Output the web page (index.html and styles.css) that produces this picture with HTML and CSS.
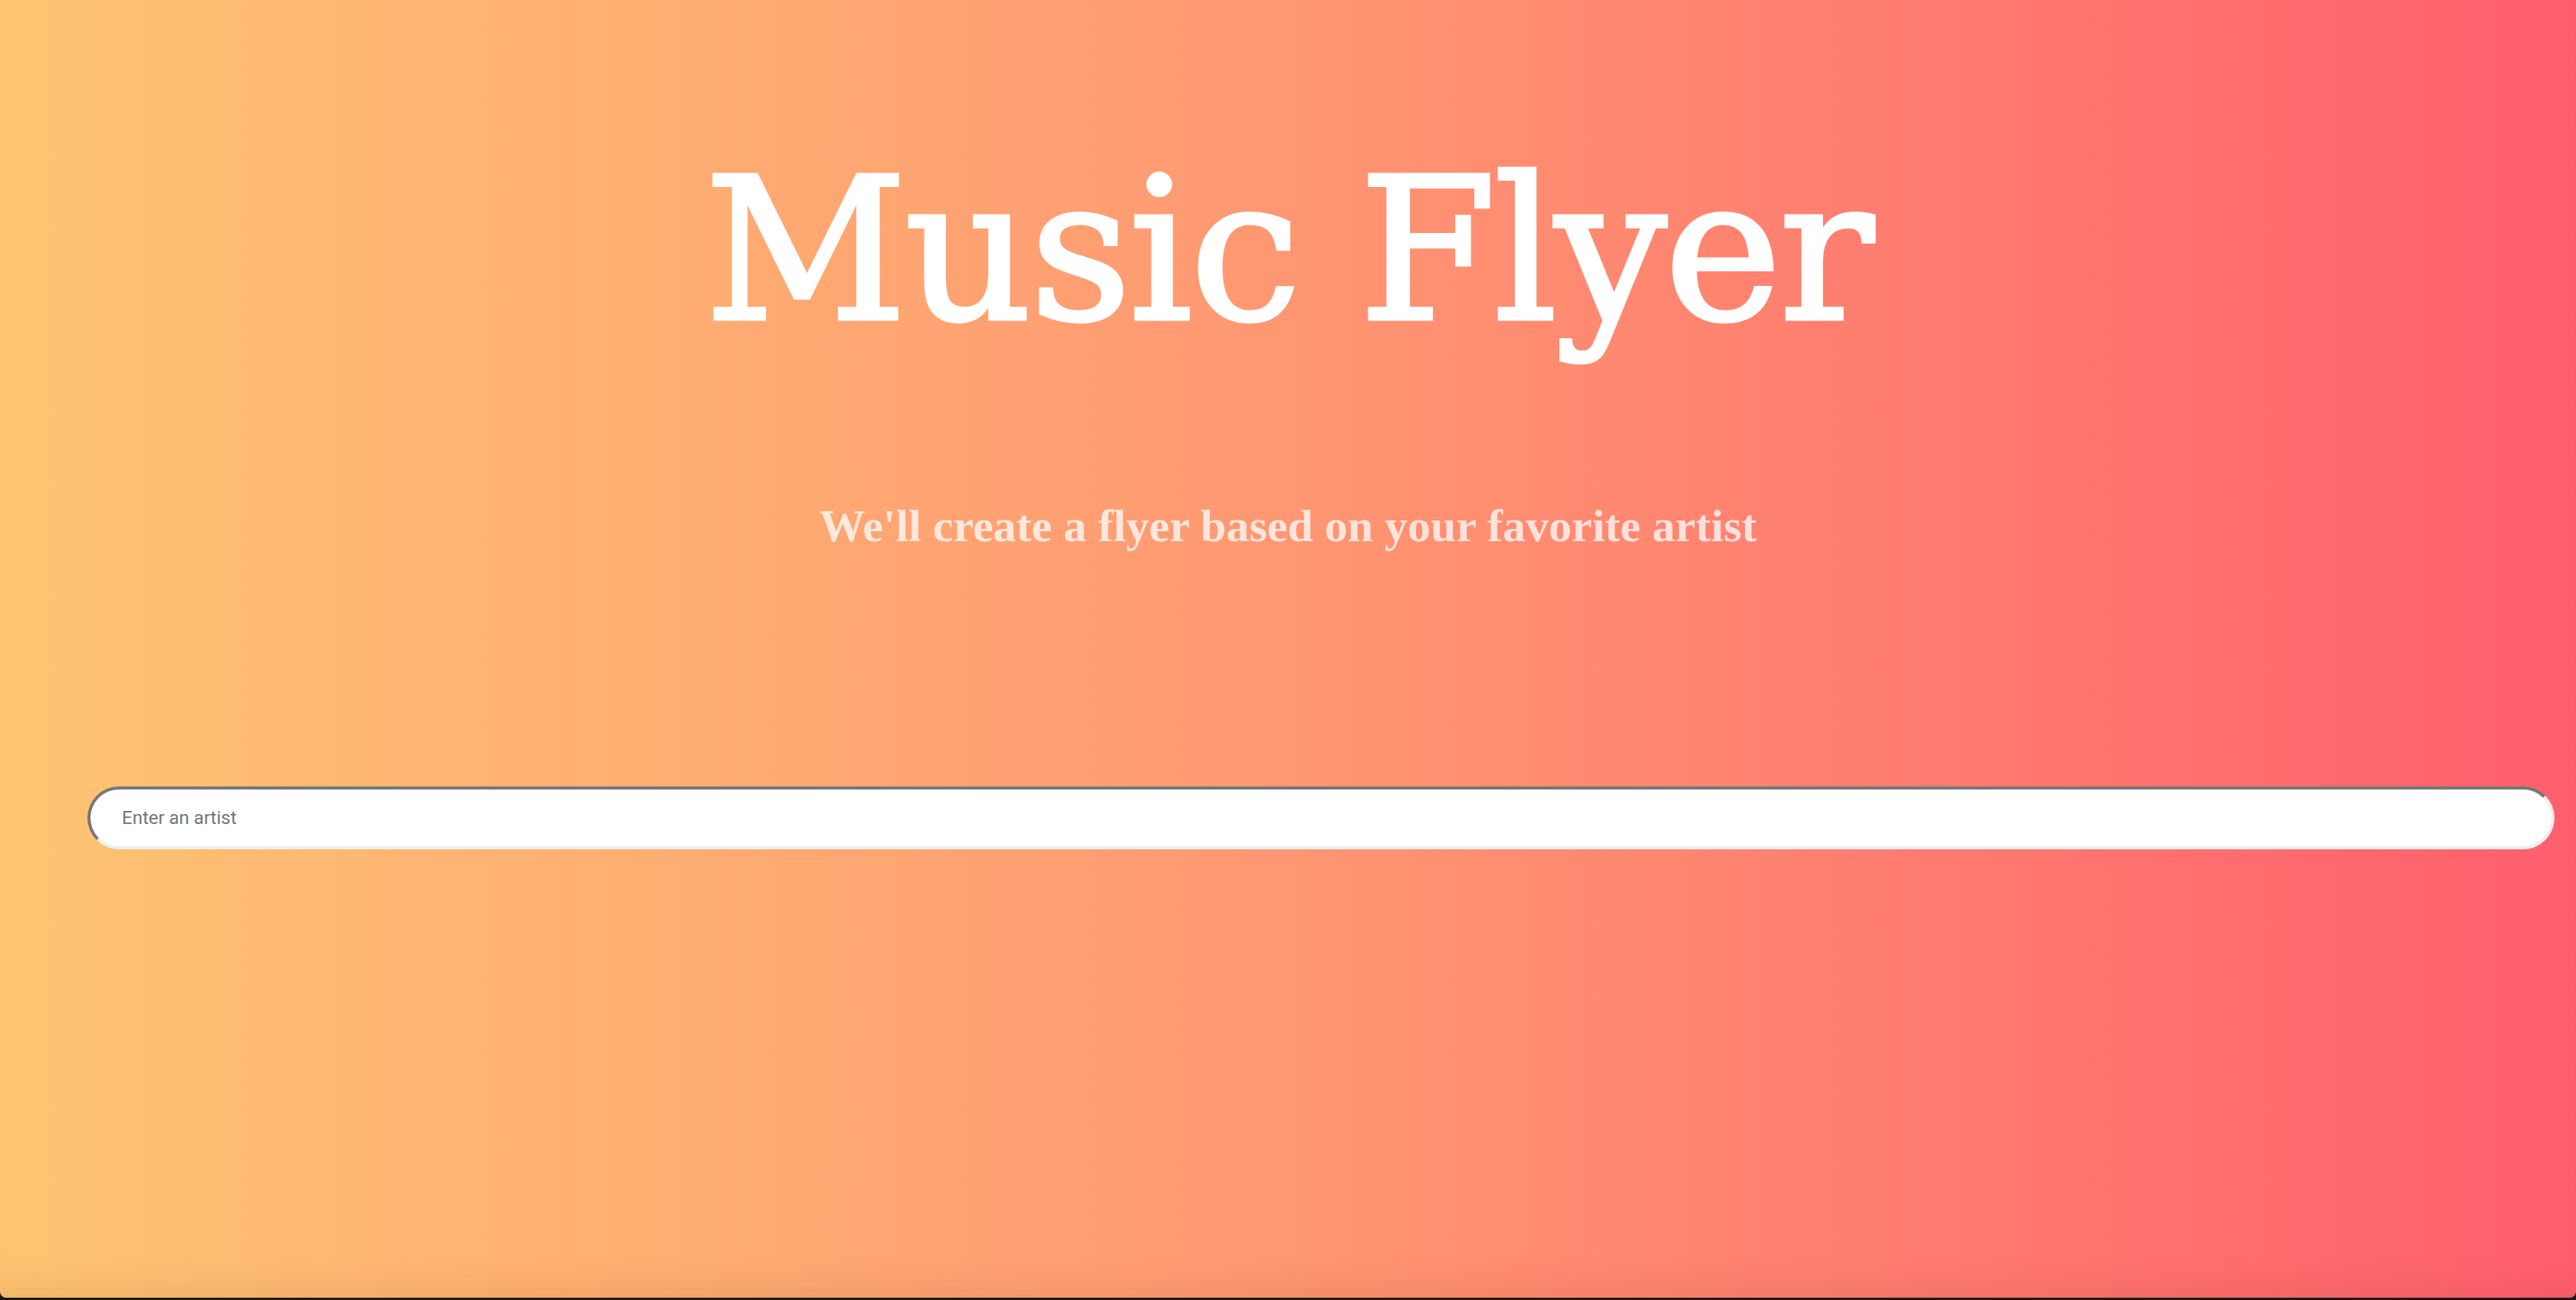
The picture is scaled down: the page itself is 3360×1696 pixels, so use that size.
FILE: index.html
```html
<!DOCTYPE html>
<html lang="en">
<head>
<meta charset="utf-8">
<title>Music Flyer</title>
<link rel="stylesheet" href="styles.css">
</head>
<body>
<main class="page">
  <header class="hero">
    <h1 class="title">Music Flyer</h1>
    <h2 class="subtitle">We'll create a flyer based on your favorite artist</h2>
  </header>
  <form class="search" onsubmit="return false;">
    <input class="search-input" type="text" placeholder="Enter an artist">
  </form>
</main>
</body>
</html>
```

FILE: styles.css
```css
html {
  background: #1b1915;
}
body {
  margin: 0;
  height: 1696px;
  overflow: hidden;
}
.page {
  height: 1693px;
  box-sizing: border-box;
  display: flex;
  flex-direction: column;
  background: linear-gradient(to right, #ffc472 0%, #ff9c72 45%, #ff5f6d 100%);
  border-radius: 0 0 8px 8px;
  box-shadow: inset 0 -50px 50px -40px rgba(90, 40, 0, 0.10);
  padding-top: 198px;
}
.hero {
  display: flex;
  flex-direction: column;
  align-items: center;
}
.title {
  margin: 0;
  font-family: "DejaVu Serif", serif;
  font-weight: normal;
  font-size: 258px;
  line-height: 1;
  letter-spacing: -3px;
  color: #ffffff;
  -webkit-text-stroke: 5px #ffffff;
}
.subtitle {
  margin: 200px 0 0;
  font-family: "Liberation Serif", "Times New Roman", serif;
  font-weight: bold;
  font-size: 60px;
  line-height: 1;
  color: rgba(255, 255, 255, 0.75);
}
.search {
  margin: 310px 0 0;
  padding: 0 28px 0 114px;
  display: flex;
}
.search-input {
  flex: 1;
  height: 82px;
  box-sizing: border-box;
  border-width: 4px;
  border-style: solid;
  border-color: #777777 #eeeeee #eeeeee #777777;
  border-radius: 41px;
  background: #ffffff;
  padding: 0 0 0 41px;
  font-family: Roboto, "Noto Sans", sans-serif;
  font-size: 24px;
  color: #333333;
  outline: none;
}
.search-input::placeholder {
  color: #757575;
}
```
